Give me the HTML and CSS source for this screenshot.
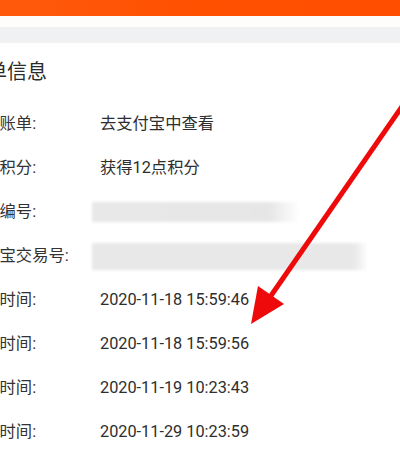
FILE: index.html
```html
<!DOCTYPE html>
<html lang="zh">
<head>
<meta charset="utf-8">
<link rel="stylesheet" href="styles.css">
</head>
<body>
<div class="page">
  <div class="topbar"></div>
  <div class="gap"></div>
  <div class="band"></div>
  <div class="card">
    <div class="title">订单信息</div>
    <div class="rows">
      <div class="row"><span class="label">查看账单:</span><span class="value">去支付宝中查看</span></div>
      <div class="row"><span class="label">获得积分:</span><span class="value">获得12点积分</span></div>
      <div class="row"><span class="label">订单编号:</span><span class="value"><span class="mask mask-short"></span></span></div>
      <div class="row"><span class="label">支付宝交易号:</span><span class="value"><span class="mask mask-long"></span></span></div>
      <div class="row"><span class="label">创建时间:</span><span class="value">2020-11-18 15:59:46</span></div>
      <div class="row"><span class="label">付款时间:</span><span class="value">2020-11-18 15:59:56</span></div>
      <div class="row"><span class="label">发货时间:</span><span class="value">2020-11-19 10:23:43</span></div>
      <div class="row"><span class="label">成交时间:</span><span class="value">2020-11-29 10:23:59</span></div>
    </div>
  </div>
  <svg class="arrow" width="400" height="456" viewBox="0 0 400 456">
    <line x1="412" y1="92" x2="268" y2="300" stroke="#ee0a0a" stroke-width="5" stroke-linecap="butt"/>
    <polygon points="251,324 258,286 284,304" fill="#ee0a0a"/>
  </svg>
</div>
</body>
</html>
```

FILE: styles.css
```css
html, body {
  margin: 0;
  padding: 0;
  background: #ffffff;
}
.page {
  position: relative;
  width: 400px;
  height: 456px;
  overflow: hidden;
  font-family: Roboto, "Noto Sans CJK SC", sans-serif;
  color: #333333;
}
.topbar {
  height: 16px;
  background: linear-gradient(to right, #ff5a0c, #ff5000 50%, #ff4e00);
}
.gap {
  height: 11px;
  background: #fffdfb;
}
.band {
  height: 16px;
  background: #f0f1f3;
}
.card {
  margin-left: -33px;
  padding-top: 17px;
}
.title {
  font-size: 20px;
  line-height: 24px;
  height: 24px;
  color: #2b2b2b;
}
.rows {
  margin-top: 18px;
  display: flex;
  flex-direction: column;
}
.row {
  display: grid;
  grid-template-columns: 133px 1fr;
  height: 44px;
  align-items: center;
  font-size: 16.3px;
  line-height: 20px;
}
.label {
  white-space: nowrap;
  color: #333333;
}
.value {
  white-space: nowrap;
  color: #2e2e2e;
  display: flex;
  align-items: center;
}
.mask {
  display: block;
  margin-left: -8px;
  background: linear-gradient(to right, #e8e8e8, #e6e6e6 85%, rgba(232,232,232,0));
  filter: blur(1.5px);
}
.mask-short {
  width: 208px;
  height: 20px;
}
.mask-long {
  width: 276px;
  height: 27px;
  background: linear-gradient(to right, #e8e8e8, #e8e8e8 95%, rgba(232,232,232,0));
}
.arrow {
  position: absolute;
  left: 0;
  top: 0;
}
```
